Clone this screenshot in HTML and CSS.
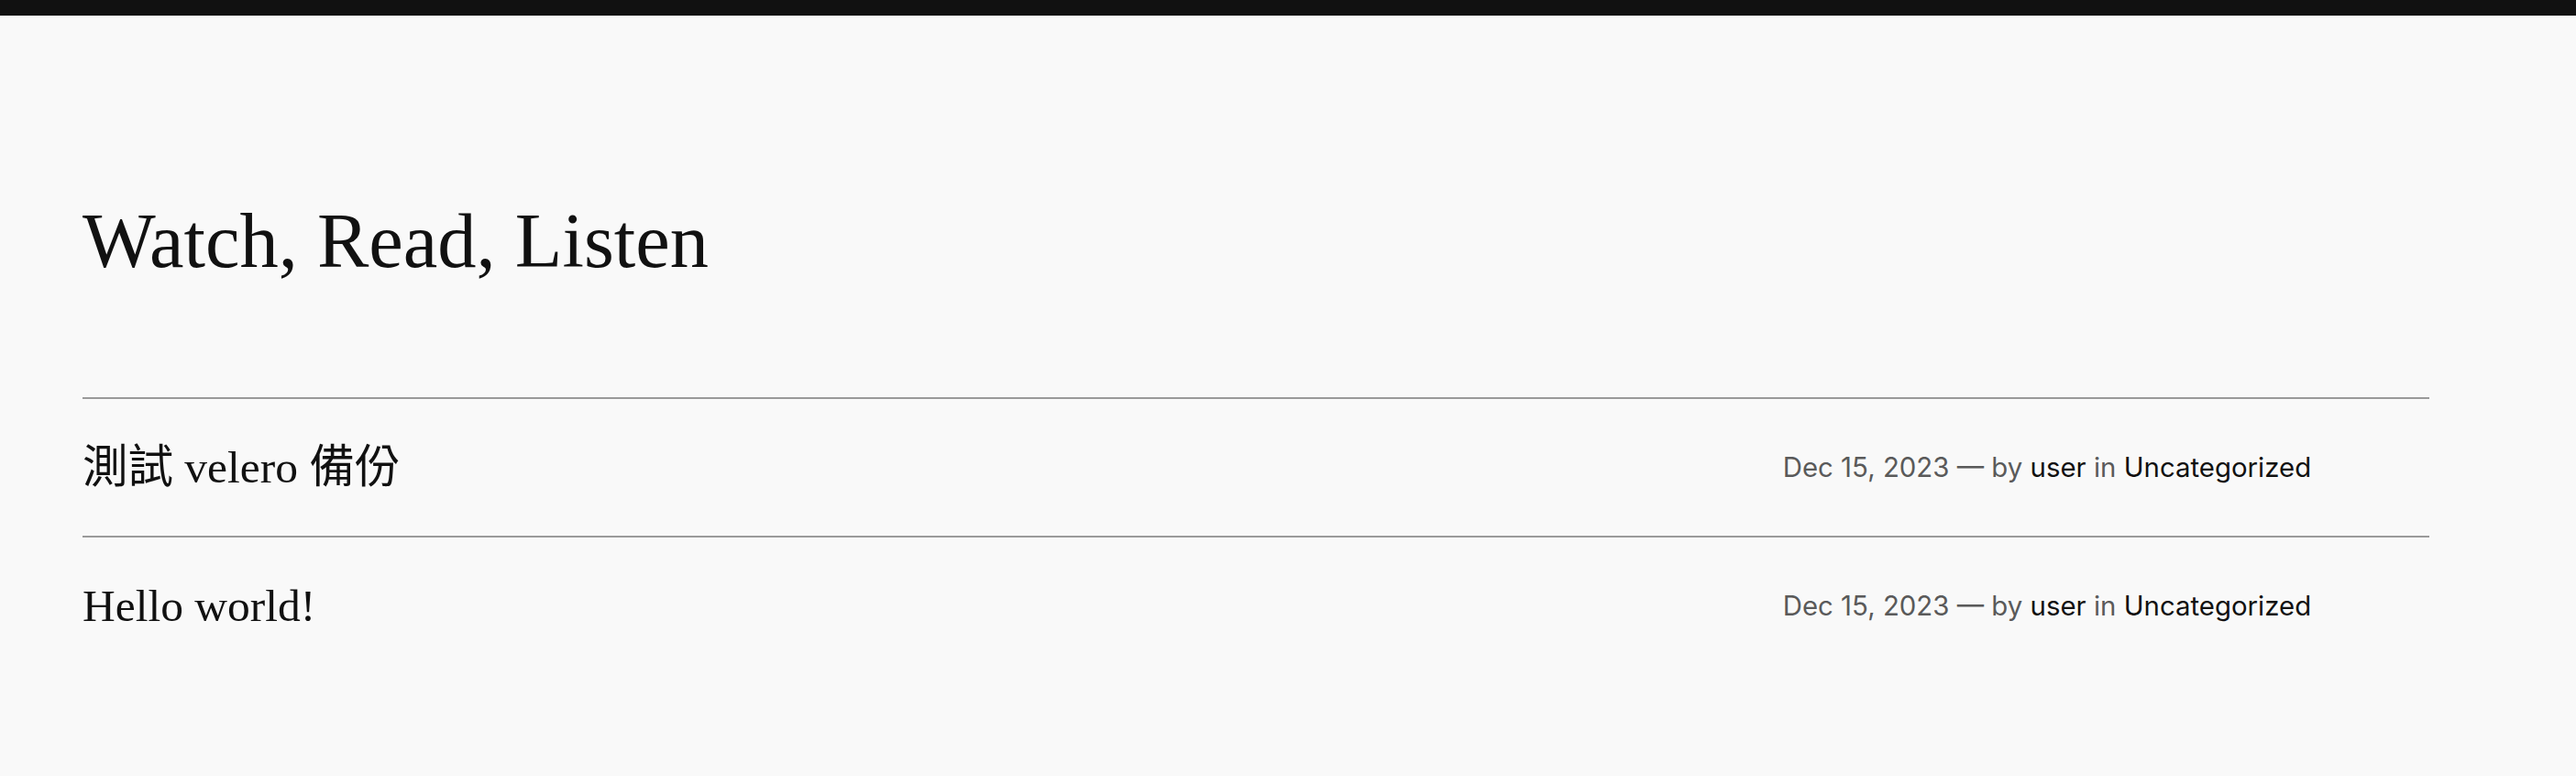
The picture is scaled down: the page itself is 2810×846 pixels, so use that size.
FILE: index.html
```html
<!DOCTYPE html>
<html lang="en">
<head>
<meta charset="utf-8">
<title>Watch, Read, Listen</title>
<link rel="stylesheet" href="styles.css">
</head>
<body>
<div class="topbar"></div>
<main class="main">
  <h1 class="page-title">Watch, Read, Listen</h1>
  <ul class="posts">
    <li class="post">
      <a class="post-title" href="#">測試 velero 備份</a>
      <div class="meta"><span class="muted">Dec 15, 2023 — by </span><a class="link" href="#">user</a><span class="muted"> in </span><a class="link" href="#">Uncategorized</a></div>
    </li>
    <li class="post">
      <a class="post-title" href="#">Hello world!</a>
      <div class="meta"><span class="muted">Dec 15, 2023 — by </span><a class="link" href="#">user</a><span class="muted"> in </span><a class="link" href="#">Uncategorized</a></div>
    </li>
  </ul>
</main>
</body>
</html>
```

FILE: styles.css
```css
html, body {
  margin: 0;
  padding: 0;
  background: #f9f9f9;
  color: #111111;
}

.topbar {
  height: 17px;
  background: #111111;
}

.main {
  padding: 195px 160px 0 90px;
}

.page-title {
  margin: 0 0 120px;
  font-family: "Liberation Serif", "Noto Sans CJK TC", serif;
  font-weight: 400;
  font-size: 84.5px;
  line-height: 1.2;
  color: #111111;
}

.posts {
  list-style: none;
  margin: 0;
  padding: 0;
}

.post {
  display: grid;
  grid-template-columns: 72.45% 27.55%;
  align-items: center;
  border-top: 2px solid #9a9a9a;
  min-height: 149px;
}

.post-title {
  font-family: "Liberation Serif", "Noto Sans CJK TC", serif;
  font-size: 49.5px;
  line-height: 1.4;
  color: #111111;
  text-decoration: none;
}

.meta {
  font-family: Inter, "Noto Sans", sans-serif;
  font-size: 29.4px;
  line-height: 1.4;
  white-space: nowrap;
}

.muted {
  color: #5a5a5a;
}

.link {
  color: #111111;
  text-decoration: none;
}
```
